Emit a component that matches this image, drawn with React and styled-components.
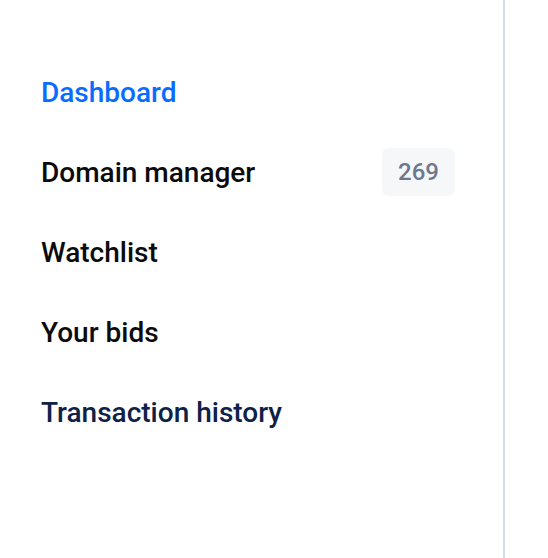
import React from 'react';
import styled, { createGlobalStyle } from 'styled-components';

const GlobalStyle = createGlobalStyle`
  html, body {
    margin: 0;
    padding: 0;
    background: #ffffff;
    font-family: Roboto, "Liberation Sans", sans-serif;
  }
`;

const Page = styled.div`
  display: flex;
  height: 558px;
`;

const Sidebar = styled.nav`
  width: 505px;
  box-sizing: border-box;
  border-right: 2px solid #d5dae3;
  padding: 68px 48px 0 41px;
  display: flex;
  flex-direction: column;
  gap: 32px;
`;

const NavItem = styled.a`
  display: flex;
  align-items: center;
  justify-content: space-between;
  height: 48px;
  font-size: 28px;
  font-weight: 500;
  text-decoration: none;
  color: ${p => (p.$active ? '#0a6cff' : p.$dark ? '#0f2147' : '#0b0b0b')};
  cursor: pointer;
`;

const Badge = styled.span`
  display: inline-flex;
  align-items: center;
  justify-content: center;
  width: 73px;
  height: 48px;
  border-radius: 7px;
  background: #f6f7f9;
  color: #6b7890;
  font-size: 24px;
  font-weight: 500;
`;

const items = [
  { label: 'Dashboard', active: true },
  { label: 'Domain manager', count: 269 },
  { label: 'Watchlist' },
  { label: 'Your bids' },
  { label: 'Transaction history', dark: true },
];

export default function App() {
  return (
    <>
      <GlobalStyle />
      <Page>
        <Sidebar>
          {items.map(item => (
            <NavItem key={item.label} $active={item.active} $dark={item.dark}>
              {item.label}
              {item.count && <Badge>{item.count}</Badge>}
            </NavItem>
          ))}
        </Sidebar>
      </Page>
    </>
  );
}
